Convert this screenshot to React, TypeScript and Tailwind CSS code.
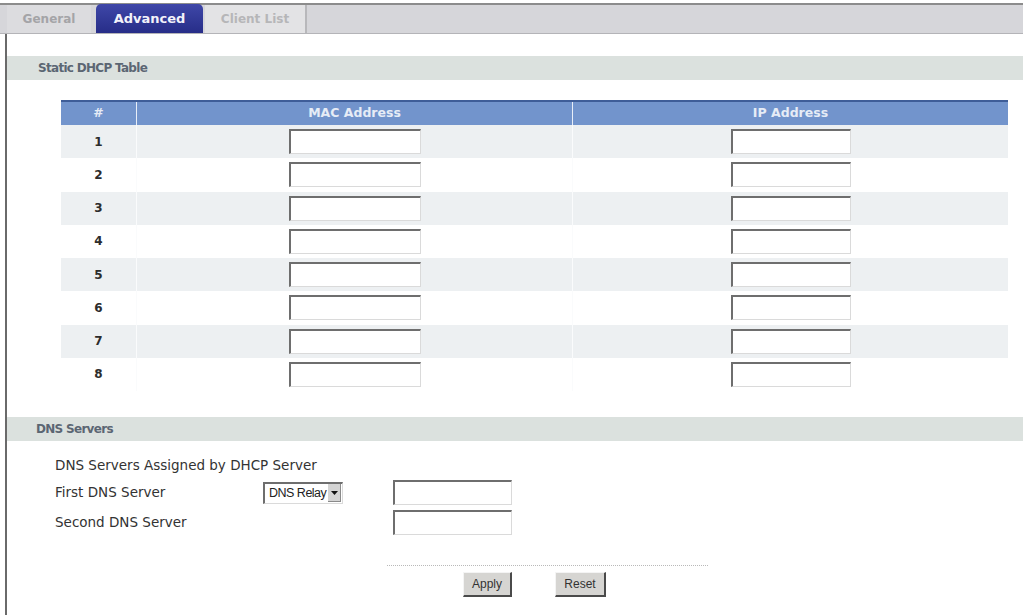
import React from "react";

const rows = [1, 2, 3, 4, 5, 6, 7, 8];

function TextBox({ width }: { width: string }) {
  return (
    <input
      type="text"
      className={`${width} h-[25px] bg-white border-t-2 border-l-2 border-r border-b border-t-[#6e6e6e] border-l-[#6e6e6e] border-r-[#dadada] border-b-[#dadada] outline-none`}
    />
  );
}

function SectionBar({ title, pad }: { title: string; pad: string }) {
  return (
    <div className={`h-[24px] bg-[#dbe1de] flex items-center ${pad}`}>
      <span className="text-[12px] font-bold tracking-[-0.7px] text-[#5b6673]">{title}</span>
    </div>
  );
}

export default function App() {
  return (
    <div
      className="w-[1023px] h-[615px] bg-white overflow-hidden flex flex-col"
      style={{ fontFamily: '"DejaVu Sans", Verdana, sans-serif' }}
    >
      {/* tab strip */}
      <div className="mt-[3px] h-[31px] bg-[#d6d6da] border-t-2 border-[#8c8c8c] border-b border-b-[#b4b4b8] flex items-end pl-[7px]">
        <div className="w-[84px] h-[28px] flex items-center justify-center text-[12px] font-bold text-[#a4a4a7] bg-[#dcdcdf]">
          General
        </div>
        <div className="ml-[5px] w-[107px] h-[29px] rounded-t-[5px] bg-gradient-to-b from-[#3f47a8] to-[#272d88] flex items-center justify-center text-[13px] font-bold text-[#f2f2fa]">
          Advanced
        </div>
        <div className="ml-[2px] w-[102px] h-[28px] flex items-center justify-center text-[12px] font-bold text-[#b6b6b8] bg-[#e3e3e5] border-r-2 border-r-[#b8b8bb]">
          Client List
        </div>
      </div>

      {/* page body */}
      <div className="flex-1 ml-[5px] border-l-2 border-[#6a6a6a] flex flex-col">
        <div className="mt-[22px]">
          <SectionBar title="Static DHCP Table" pad="pl-[31px]" />
        </div>

        {/* static DHCP table */}
        <div className="mt-[20px] ml-[54px] w-[947px]">
          <div className="flex h-[25px] bg-[#7294cc] border-t-2 border-[#3e5d98] text-[12.5px] font-bold text-[#e6ecf6]">
            <div className="w-[76px] flex items-center justify-center border-r border-[#e8eef8]">#</div>
            <div className="w-[436px] flex items-center justify-center border-r border-[#e8eef8]">MAC Address</div>
            <div className="flex-1 flex items-center justify-center">IP Address</div>
          </div>
          {rows.map((n) => (
            <div
              key={n}
              className={`flex h-[33.25px] ${n % 2 === 1 ? "bg-[#edf0f2]" : "bg-white"}`}
            >
              <div className="w-[76px] flex items-center justify-center border-r border-[#fafbfc] text-[12px] font-bold text-[#2c2c2c]">
                {n}
              </div>
              <div className="w-[436px] flex items-center justify-center border-r border-[#fafbfc]">
                <TextBox width="w-[132px]" />
              </div>
              <div className="flex-1 flex items-center justify-center">
                <TextBox width="w-[120px]" />
              </div>
            </div>
          ))}
        </div>

        <div className="mt-[26px]">
          <SectionBar title="DNS Servers" pad="pl-[29px]" />
        </div>

        {/* DNS settings */}
        <div className="mt-[16px] ml-[48px] text-[13.5px] text-[#333333]">
          <div className="h-[17px] flex items-center">DNS Servers Assigned by DHCP Server</div>
          <div className="mt-[6px] flex items-center h-[25px]">
            <div className="w-[208px]">First DNS Server</div>
            <div className="w-[80px] h-[22px] flex items-center justify-between bg-white border-t-2 border-l-2 border-r border-b border-t-[#6e6e6e] border-l-[#6e6e6e] border-r-[#dadada] border-b-[#dadada]">
              <span
                className="pl-[4px] text-[12.5px] tracking-[-0.5px] whitespace-nowrap text-[#222]"
                style={{ fontFamily: '"Liberation Sans", Arial, sans-serif' }}
              >
                DNS Relay
              </span>
              <span className="w-[13px] h-[18px] mr-[1px] bg-[#d4d4d4] border-r border-b border-[#8a8a8a] flex items-center justify-center">
                <svg width="7" height="4" viewBox="0 0 7 4">
                  <path d="M0 0h7L3.5 4z" fill="#111" />
                </svg>
              </span>
            </div>
            <div className="ml-[50px]">
              <TextBox width="w-[119px]" />
            </div>
          </div>
          <div className="mt-[5px] flex items-center h-[25px]">
            <div className="w-[338px]">Second DNS Server</div>
            <TextBox width="w-[119px]" />
          </div>
        </div>

        {/* actions */}
        <div className="mt-[30px] ml-[380px] w-[321px] border-t border-dotted border-[#b9b9b9]" />
        <div
          className="mt-[6px] ml-[456px] flex gap-[43px]"
          style={{ fontFamily: '"Liberation Sans", Arial, sans-serif' }}
        >
          <button className="w-[49px] h-[25px] bg-[#d6d5d2] text-[12px] text-[#333] border-t border-l border-[#f4f4f4] border-r-2 border-b-2 border-r-[#4a4a4a] border-b-[#4a4a4a]">
            Apply
          </button>
          <button className="w-[51px] h-[25px] bg-[#d6d5d2] text-[12px] text-[#333] border-t border-l border-[#f4f4f4] border-r-2 border-b-2 border-r-[#4a4a4a] border-b-[#4a4a4a]">
            Reset
          </button>
        </div>
      </div>
    </div>
  );
}
